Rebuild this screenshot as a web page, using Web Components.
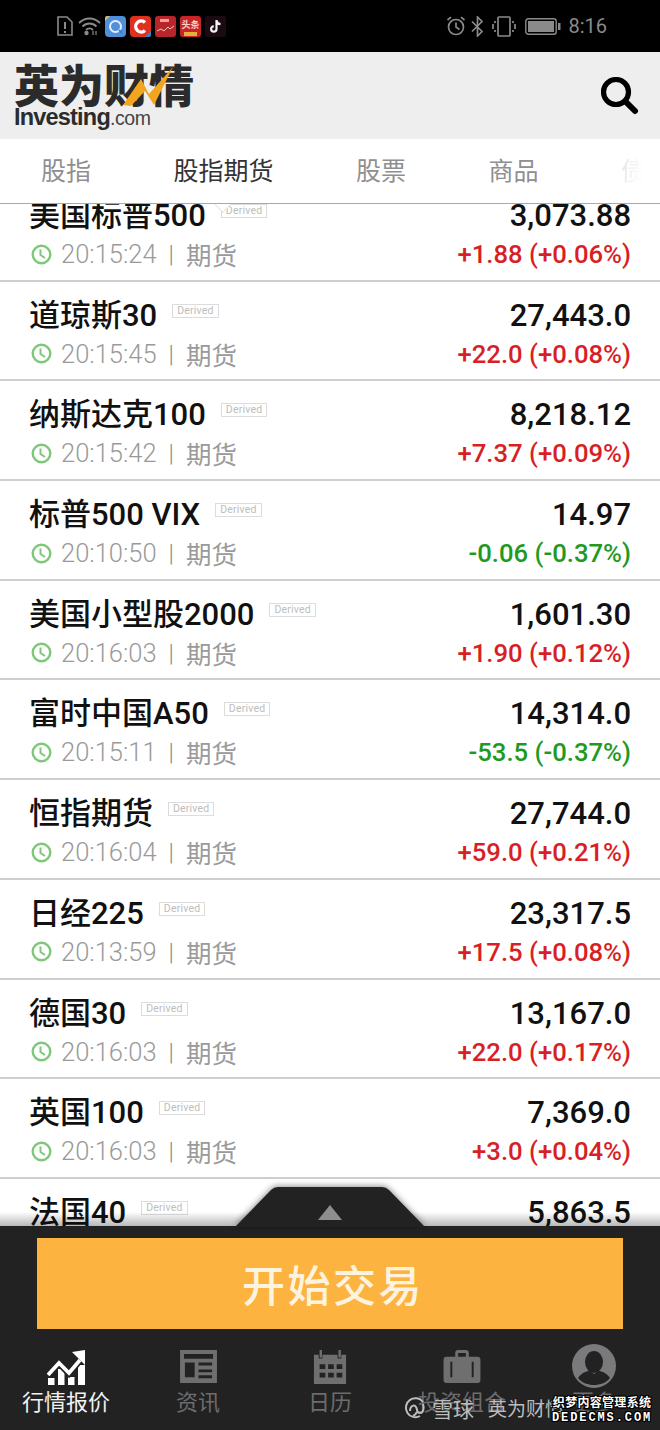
<!DOCTYPE html>
<html lang="zh">
<head>
<meta charset="utf-8">
<title>Investing</title>
<style>
  html, body { margin: 0; padding: 0; }
  body { width: 660px; height: 1430px; overflow: hidden; background: #fff; font-family: Roboto, "Noto Sans CJK SC", sans-serif; }
  #app { display: flex; flex-direction: column; height: 1430px; position: relative; }
</style>
</head>
<body>
<div id="app">
  <status-bar></status-bar>
  <app-header></app-header>
  <tab-bar></tab-bar>
  <quote-list>
    <quote-row name="美国标普500" time="20:15:24" price="3,073.88" change="+1.88 (+0.06%)"></quote-row>
    <quote-row name="道琼斯30" time="20:15:45" price="27,443.0" change="+22.0 (+0.08%)"></quote-row>
    <quote-row name="纳斯达克100" time="20:15:42" price="8,218.12" change="+7.37 (+0.09%)"></quote-row>
    <quote-row name="标普500 VIX" time="20:10:50" price="14.97" change="-0.06 (-0.37%)"></quote-row>
    <quote-row name="美国小型股2000" time="20:16:03" price="1,601.30" change="+1.90 (+0.12%)"></quote-row>
    <quote-row name="富时中国A50" time="20:15:11" price="14,314.0" change="-53.5 (-0.37%)"></quote-row>
    <quote-row name="恒指期货" time="20:16:04" price="27,744.0" change="+59.0 (+0.21%)"></quote-row>
    <quote-row name="日经225" time="20:13:59" price="23,317.5" change="+17.5 (+0.08%)"></quote-row>
    <quote-row name="德国30" time="20:16:03" price="13,167.0" change="+22.0 (+0.17%)"></quote-row>
    <quote-row name="英国100" time="20:16:03" price="7,369.0" change="+3.0 (+0.04%)"></quote-row>
    <quote-row name="法国40" time="20:16:03" price="5,863.5" change="+8.0 (+0.14%)"></quote-row>
  </quote-list>
  <trade-footer></trade-footer>
  <water-mark></water-mark>
</div>

<script>
class StatusBar extends HTMLElement {
    constructor() {
        super();
        this.shadowDOM = this.attachShadow({ mode: "open" });
        this.shadowDOM.innerHTML = `
            <style>
                :host { display: flex; align-items: center; height: 52px; flex: none; background: #000; box-sizing: border-box; padding: 0 53px 0 57px; }
                svg { display: block; flex: none; }
                .apps { display: flex; gap: 4px; margin-left: 4px; }
                .gap { flex: 1; }
                .time { font: 400 20px Roboto, sans-serif; color: #8a8a8a; margin-left: 7px; }
                text { font-family: "Noto Sans CJK SC", sans-serif; font-weight: 700; }
            </style>
            <svg width="16" height="20" viewBox="0 0 16 20" fill="none" stroke="#8a8a8a" stroke-width="1.6"><path d="M1 1h9l5 5v13H1z"/><path d="M8 6v7M8 15v2" stroke-width="2"/></svg>
            <svg style="margin-left:5px" width="23" height="20" viewBox="0 0 23 20" fill="none" stroke="#8a8a8a" stroke-width="1.8"><path d="M1 7c6-6 15-6 21 0M4.500 10.500c4-4 10-4 14 0M8 14c2-2 5-2 7 0"/><circle cx="8.500" cy="17" r="1.300" fill="#8a8a8a"/><path d="M15 15v4M18 15v4" stroke-width="1.200"/></svg>
            <div class="apps">
                <svg width="21" height="21" viewBox="0 0 21 21"><rect width="21" height="21" rx="4" fill="#4f8fdc"/><circle cx="10.500" cy="10.500" r="5.500" fill="none" stroke="#e4effb" stroke-width="2"/><path d="M0 5l5-5H2q-2 0-2 2z" fill="#c9b97a"/><path d="M14 14l3 3" stroke="#3f7fc8" stroke-width="2"/></svg>
                <svg width="21" height="21" viewBox="0 0 21 21"><rect width="21" height="21" rx="4" fill="#e0301f"/><path d="M15 6.500a5.500 5.500 0 1 0 0 8" fill="none" stroke="#fff" stroke-width="3.400"/><path d="M21 15v4q0 2-2 2h-4z" fill="#3f7fc8"/></svg>
                <svg width="21" height="21" viewBox="0 0 21 21"><rect width="21" height="21" rx="3" fill="#b8262c"/><path d="M2 15l4-2 3 2 4-4 2 2 4-3" fill="none" stroke="#f3c7b4" stroke-width="1"/><path d="M5 3h9v3H5z" fill="#e9a698"/></svg>
                <svg width="21" height="21" viewBox="0 0 21 21"><rect width="21" height="21" rx="3" fill="#c8242a"/><text x="1.500" y="12" font-size="9" fill="#f5d9c4">头条</text><rect x="4" y="16" width="13" height="4" fill="#e4b23a"/></svg>
                <svg width="21" height="21" viewBox="0 0 21 21"><rect width="21" height="21" rx="2" fill="#1a0a12"/><path d="M11.500 4v9a2.700 2.700 0 1 1-2.700-2.700M11.500 4.500c.5 2.500 2 3.500 4 3.700" fill="none" stroke="#f2f2f2" stroke-width="2.200"/></svg>
            </div>
            <div class="gap"></div>
            <svg width="20" height="20" viewBox="0 0 20 20" fill="none" stroke="#8a8a8a" stroke-width="1.700"><circle cx="10" cy="11" r="7.500"/><path d="M10 6.500V11l3.500 2.500M1.500 4L5 1.200M18.500 4L15 1.200"/></svg>
            <svg style="margin-left:5px" width="13" height="21" viewBox="0 0 13 21" fill="none" stroke="#8a8a8a" stroke-width="1.700"><path d="M1 5.500l10 10-4.500 4.500V1l4.500 4.500-10 10"/></svg>
            <svg style="margin-left:8px" width="24" height="21" viewBox="0 0 24 21" fill="none" stroke="#8a8a8a" stroke-width="1.700"><rect x="6" y="1" width="12" height="19" rx="1"/><path d="M3 5v2M1 8v5M3 14v2M21 5v2M23 8v5M21 14v2"/></svg>
            <svg style="margin-left:9px" width="36" height="17" viewBox="0 0 36 17"><rect x=".8" y=".8" width="30.400" height="15.400" rx="2.500" fill="none" stroke="#8a8a8a" stroke-width="1.400"/><rect x="3" y="3" width="26" height="11" fill="#8a8a8a"/><rect x="33" y="5" width="2.500" height="7" fill="#8a8a8a"/></svg>
            <span class="time">8:16</span>
        `;
    }
}

class AppHeader extends HTMLElement {
    constructor() {
        super();
        this.shadowDOM = this.attachShadow({ mode: "open" });
        this.shadowDOM.innerHTML = `
            <style>
                :host { display: flex; align-items: center; justify-content: space-between; height: 87px; flex: none; background: #eeeeee; box-sizing: border-box; padding: 0 21px 0 14px; }
                .logo { position: relative; width: 182px; height: 64px; color: #2b2b2b; line-height: 1; }
                .cn { font: 900 45px/44px "Noto Sans CJK SC", sans-serif; display: block; white-space: nowrap; margin-top: -2px; }
                .en { font: 700 23.500px/19px "Liberation Sans", sans-serif; letter-spacing: -.8px; display: block; white-space: nowrap; margin-top: 2px; }
                .en span { font-weight: 400; font-size: 19.500px; letter-spacing: -.4px; color: #444; }
                .bolt { position: absolute; left: 109px; top: 3px; }
            </style>
            <div class="logo">
                <span class="cn">英为财情</span>
                <span class="en">Investing<span>.com</span></span>
                <svg class="bolt" width="52" height="40" viewBox="0 0 52 40"><path d="M0 38L18 12l8 15L50 0 31 38 22 24 8 39z" fill="#f2a51f"/></svg>
            </div>
            <svg width="38" height="38" viewBox="0 0 38 38" fill="none" stroke="#000"><circle cx="15" cy="15" r="12.500" stroke-width="5.200"/><path d="M25 25l9 9" stroke-width="6" stroke-linecap="round"/></svg>
        `;
    }
}

class TabBar extends HTMLElement {
    constructor() {
        super();
        this.shadowDOM = this.attachShadow({ mode: "open" });
        this.shadowDOM.innerHTML = `
            <style>
                :host { display: flex; position: relative; z-index: 2; height: 65px; flex: none; box-sizing: border-box; background: #fff; border-bottom: 1px solid #a9a9a9; padding: 0 0 5px 41px; gap: 82.500px; align-items: center; overflow: hidden; font: 400 25px "Noto Sans CJK SC", sans-serif; color: #8f8f8f; white-space: nowrap; }
                .on { color: #333; position: relative; }
                .fade { position: absolute; right: 0; top: 0; bottom: 0; width: 42px; background: linear-gradient(to right, rgba(255,255,255,.75), #fff 60%); }
                span { flex: none; }
            </style>
            <span>股指</span><span class="on">股指期货</span><span>股票</span><span>商品</span><span>债券</span>
            <div class="fade"></div>
        `;
    }
}

class QuoteList extends HTMLElement {
    constructor() {
        super();
        this.shadowDOM = this.attachShadow({ mode: "open" });
        this.shadowDOM.innerHTML = `
            <style>
                :host { display: block; flex: 1; min-height: 0; overflow: hidden; position: relative; background: #fff; }
                .scroll { margin-top: -22px; }
                .notch { position: absolute; left: 214px; top: -9px; width: 16px; height: 16px; background: #fff; border: 1px solid #ccc; transform: rotate(45deg) scale(.7); }
                .edge { position: absolute; left: 0; right: 0; bottom: 0; height: 14px; background: linear-gradient(to bottom, rgba(0,0,0,0), rgba(0,0,0,.28)); }
            </style>
            <div class="scroll"><slot></slot></div>
            <div class="notch"></div>
            <div class="edge"></div>
        `;
    }
}

class QuoteRow extends HTMLElement {
    constructor() {
        super();
        this.shadowDOM = this.attachShadow({ mode: "open" });
    }
    connectedCallback() {
        const change = this.getAttribute("change");
        const color = change.startsWith("-") ? "#1f9a1f" : "#d81f26";
        this.shadowDOM.innerHTML = `
            <style>
                :host { display: flex; flex-direction: column; gap: 2px; height: 99.7px; box-sizing: border-box; padding: 16px 29px 0 29px; border-bottom: 2px solid #cfcfcf; background: #fff; }
                .line { display: flex; align-items: center; justify-content: space-between; height: 36px; white-space: nowrap; }
                .left { display: flex; align-items: center; }
                .name { font: 500 31px/36px Roboto, "Noto Sans CJK SC", sans-serif; color: #111; }
                .tag { font: 400 10.500px/11px Roboto, sans-serif; color: #bdbdbd; border: 1px solid #dcdcdc; padding: 0 4px 1px; margin: -10px 0 0 15px; height: 11px; box-sizing: content-box; letter-spacing: .2px; }
                .price { font: 500 31px/36px Roboto, sans-serif; color: #111; }
                .time { font: 300 25.500px/36px Roboto, sans-serif; color: #9a9a9a; margin-left: 9px; }
                .sep { font: 300 24px/36px Roboto, sans-serif; color: #8a8a8a; margin: 0 12px 0 12px; }
                .kind { font: 400 25.500px/34px "Noto Sans CJK SC", sans-serif; color: #9a9a9a; }
                .change { font: 500 25.700px/36px Roboto, sans-serif; color: ${color}; }
                svg { display: block; margin-left: 2px; flex: none; }
            </style>
            <div class="line">
                <div class="left"><span class="name">${this.getAttribute("name")}</span><span class="tag">Derived</span></div>
                <span class="price">${this.getAttribute("price")}</span>
            </div>
            <div class="line">
                <div class="left">
                    <svg width="21" height="21" viewBox="0 0 21 21" fill="none" stroke="#7ec87a" stroke-width="2.400"><circle cx="10.500" cy="10.500" r="8.800"/><path d="M9.500 5.500v5.500l4.500 3" stroke-width="2"/></svg>
                    <span class="time">${this.getAttribute("time")}</span><span class="sep">|</span><span class="kind">期货</span>
                </div>
                <span class="change">${change}</span>
            </div>
        `;
    }
}

class TradeFooter extends HTMLElement {
    constructor() {
        super();
        this.shadowDOM = this.attachShadow({ mode: "open" });
        this.shadowDOM.innerHTML = `
            <style>
                :host { display: flex; flex-direction: column; position: relative; z-index: 1; height: 204px; flex: none; box-sizing: border-box; background: #222222; padding-top: 12px; }
                .handle { position: absolute; left: 235px; top: -39px; filter: drop-shadow(0 -1px 3px rgba(0,0,0,.45)); }
                button { display: block; height: 91px; margin: 0 37px; padding: 0 0 2px 6px; border: 0; background: #fdb33f; color: #fdf3df; font: 500 43px "Noto Sans CJK SC", sans-serif; letter-spacing: 2.500px; flex: none; }
                nav { display: grid; grid-template-columns: repeat(5, 132px); flex: 1; }
            </style>
            <svg class="handle" width="190" height="40" viewBox="0 0 190 40"><path d="M0 40L36 3q3-3 7-3h104q4 0 7 3l36 37z" fill="#222"/><path d="M83 33l12-15 12 15z" fill="#8e8e8e"/></svg>
            <button>开始交易</button>
            <nav>
                <nav-item label="行情报价" active>
                    <svg width="39" height="35" viewBox="0 0 39 35"><path d="M1 28h6.500v7H1zM11 19h6.500v16H11zM21 27h6.500v8H21zM31 15h7v20h-7z" fill="#fff"/><path d="M1 25l11-12 10 10 11-13" fill="none" stroke="#222" stroke-width="7"/><path d="M1 25l11-12 10 10 11-13" fill="none" stroke="#fff" stroke-width="3.800"/><path d="M25 2L38 0v15z" fill="#fff"/></svg>
                </nav-item>
                <nav-item label="资讯">
                    <svg width="37" height="33" viewBox="0 0 38 34"><path fill-rule="evenodd" fill="#6f6f6f" d="M0 0h38v34H0zM4 4v5h30V4zM5 13v15h10V13zM19 13v3h14v-3zM19 20v3h14v-3zM19 26v3h14v-3z"/></svg>
                </nav-item>
                <nav-item label="日历">
                    <svg width="38" height="34" viewBox="0 0 38 36"><path fill-rule="evenodd" fill="#6f6f6f" d="M2 5h5v4h4V5h16v4h4V5h5v31H2zM8 15v5h6v-5zM17 15v5h6v-5zM26 15v5h6v-5zM8 24v5h6v-5zM17 24v5h6v-5zM26 24v5h6v-5z"/><rect x="8" y="0" width="2.500" height="8" fill="#6f6f6f"/><rect x="28" y="0" width="2.500" height="8" fill="#6f6f6f"/></svg>
                </nav-item>
                <nav-item label="投资组合">
                    <svg width="38" height="33" viewBox="0 0 38 34"><path fill-rule="evenodd" fill="#6f6f6f" d="M3 7h9V3q0-3 3-3h8q3 0 3 3v4h9q3 0 3 3v21q0 3-3 3H3q-3 0-3-3V10q0-3 3-3zM15 3v4h8V3zM7 12v16h2V12zM29 12v16h2V12z"/></svg>
                </nav-item>
                <nav-item label="更多">
                    <svg width="44" height="44" viewBox="0 0 44 44" style="margin-top:-6px"><circle cx="22" cy="22" r="22" fill="#7a7a7c"/><ellipse cx="22" cy="18" rx="9" ry="11" fill="#222"/><path d="M6 34c4-6 9-7 12-7l4 3 4-3c3 0 8 1 12 7-4 5-10 7-16 7s-12-2-16-7z" fill="#222"/></svg>
                </nav-item>
            </nav>
        `;
    }
}

class NavItem extends HTMLElement {
    constructor() {
        super();
        this.shadowDOM = this.attachShadow({ mode: "open" });
    }
    connectedCallback() {
        const color = this.hasAttribute("active") ? "#f2f2f2" : "#6c6c6c";
        this.shadowDOM.innerHTML = `
            <style>
                :host { display: flex; flex-direction: column; align-items: center; padding-top: 21px; box-sizing: border-box; }
                .icon { height: 36px; display: flex; align-items: flex-start; }
                span { font: 400 22px/30px "Noto Sans CJK SC", sans-serif; color: ${color}; margin-top: -1px; white-space: nowrap; }
            </style>
            <div class="icon"><slot></slot></div>
            <span>${this.getAttribute("label")}</span>
        `;
    }
}

class WaterMark extends HTMLElement {
    constructor() {
        super();
        this.shadowDOM = this.attachShadow({ mode: "open" });
        this.shadowDOM.innerHTML = `
            <style>
                :host { display: flex; position: absolute; z-index: 3; left: 404px; top: 1394px; align-items: center; white-space: nowrap; font-family: "Noto Sans CJK SC", sans-serif; color: #bdbdbd; }
                .xq { font-size: 21px; line-height: 28px; margin-left: 6px; }
                .name { font-size: 19px; line-height: 28px; margin-left: 14px; }
                .dede { position: absolute; left: 148px; top: 2px; color: #fff; text-align: center; line-height: 1; text-shadow: 1px 0 0 #000, -1px 0 0 #000, 0 1px 0 #000, 0 -1px 0 #000, 1px 1px 0 #000, -1px -1px 0 #000, 1px -1px 0 #000, -1px 1px 0 #000; }
                .dede b { display: block; font-size: 12px; font-weight: 700; letter-spacing: .3px; }
                .dede i { display: block; font: 700 12px "Liberation Mono", monospace; letter-spacing: 1.900px; margin-top: 3px; }
            </style>
            <svg width="22" height="24" viewBox="0 0 22 24" fill="none" stroke="#bdbdbd" stroke-width="2"><path d="M16 20A9.500 9.500 0 1 1 19 6"/><path d="M6 15c0-5 4-7 6-4s0 6 4 6 4-6 3-9M9 20c2-1 3-2 4-4"/></svg>
            <span class="xq">雪球</span>
            <span class="name">英为财情</span>
            <div class="dede"><b>织梦内容管理系统</b><i>DEDECMS.COM</i></div>
        `;
    }
}

customElements.define("status-bar", StatusBar);
customElements.define("app-header", AppHeader);
customElements.define("tab-bar", TabBar);
customElements.define("quote-list", QuoteList);
customElements.define("quote-row", QuoteRow);
customElements.define("trade-footer", TradeFooter);
customElements.define("nav-item", NavItem);
customElements.define("water-mark", WaterMark);
</script>
</body>
</html>
